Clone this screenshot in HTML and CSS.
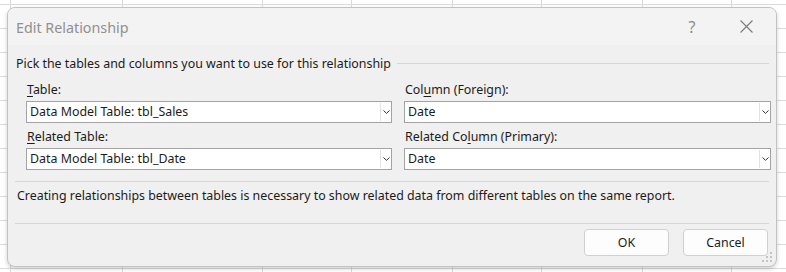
FILE: index.html
```html
<!DOCTYPE html>
<html lang="en">
<head>
  <meta charset="UTF-8" />
  <title>Edit Relationship</title>
  <link rel="stylesheet" href="styles.css">
</head>
<body>
  <div class="sheet">
    <div class="dialog">
      <div class="titlebar">
        <span class="title">Edit Relationship</span>
        <span class="help">?</span>
        <span class="close">
          <svg width="13" height="13" viewBox="0 0 13 13"><path d="M0.5 0.5 L12.5 12.5 M12.5 0.5 L0.5 12.5" stroke="#7a7a7a" stroke-width="1.1" fill="none"/></svg>
        </span>
      </div>

      <div class="content">
        <div class="group-head">
          <span>Pick the tables and columns you want to use for this relationship</span>
          <div class="rule"></div>
        </div>

        <div class="fields">
          <div class="field">
            <label><u>T</u>able:</label>
            <div class="combo">
              <span class="combo-value">Data Model Table: tbl_Sales</span>
              <span class="combo-btn"><svg width="7" height="4" viewBox="0 0 7 4"><path d="M0.5 0.5 L3.5 3.3 L6.5 0.5" stroke="#333" fill="none"/></svg></span>
            </div>
          </div>
          <div class="field">
            <label>Col<u>u</u>mn (Foreign):</label>
            <div class="combo">
              <span class="combo-value">Date</span>
              <span class="combo-btn"><svg width="7" height="4" viewBox="0 0 7 4"><path d="M0.5 0.5 L3.5 3.3 L6.5 0.5" stroke="#333" fill="none"/></svg></span>
            </div>
          </div>
          <div class="field">
            <label><u>R</u>elated Table:</label>
            <div class="combo">
              <span class="combo-value">Data Model Table: tbl_Date</span>
              <span class="combo-btn"><svg width="7" height="4" viewBox="0 0 7 4"><path d="M0.5 0.5 L3.5 3.3 L6.5 0.5" stroke="#333" fill="none"/></svg></span>
            </div>
          </div>
          <div class="field">
            <label>Related Co<u>l</u>umn (Primary):</label>
            <div class="combo">
              <span class="combo-value">Date</span>
              <span class="combo-btn"><svg width="7" height="4" viewBox="0 0 7 4"><path d="M0.5 0.5 L3.5 3.3 L6.5 0.5" stroke="#333" fill="none"/></svg></span>
            </div>
          </div>
        </div>

        <div class="divider"></div>
        <p class="note">Creating relationships between tables is necessary to show related data from different tables on the same report.</p>
        <div class="divider"></div>

        <div class="buttons">
          <button class="btn">OK</button>
          <button class="btn">Cancel</button>
        </div>
      </div>

      <div class="grip">
        <svg width="12" height="12" viewBox="0 0 12 12" fill="#c4c4c4">
          <rect x="8" y="0" width="2" height="2"/>
          <rect x="4" y="4" width="2" height="2"/><rect x="8" y="4" width="2" height="2"/>
          <rect x="0" y="8" width="2" height="2"/><rect x="4" y="8" width="2" height="2"/><rect x="8" y="8" width="2" height="2"/>
        </svg>
      </div>
    </div>
  </div>
</body>
</html>
```

FILE: styles.css
```css
html, body {
  margin: 0;
  padding: 0;
}
body {
  width: 786px;
  height: 272px;
  overflow: hidden;
  font-family: "Noto Sans", "Open Sans", sans-serif;
  font-size: 12.4px;
  color: #1b1b1b;
}

/* spreadsheet behind the dialog */
.sheet {
  width: 786px;
  height: 272px;
  padding: 7px 0 0 7px;
  box-sizing: border-box;
  background-color: #fff;
  background-image:
    linear-gradient(to right, transparent 10px, #dadada 10px, #dadada 11px, transparent 11px),
    linear-gradient(to right, transparent 122px, #dadada 122px, #dadada 123px, transparent 123px),
    linear-gradient(to right, transparent 262px, #dadada 262px, #dadada 263px, transparent 263px),
    linear-gradient(to right, transparent 351px, #dadada 351px, #dadada 352px, transparent 352px),
    linear-gradient(to right, transparent 452px, #dadada 452px, #dadada 453px, transparent 453px),
    linear-gradient(to right, transparent 541px, #dadada 541px, #dadada 542px, transparent 542px),
    linear-gradient(to right, transparent 642px, #dadada 642px, #dadada 643px, transparent 643px),
    linear-gradient(to right, transparent 731px, #dadada 731px, #dadada 732px, transparent 732px),
    repeating-linear-gradient(to bottom, transparent 0, transparent 4px, #dadada 4px, #dadada 5px, transparent 5px, transparent 24px);
}

.dialog {
  position: relative;
  width: 770px;
  height: 260px;
  box-sizing: border-box;
  background: #f0f0f0;
  border: 1px solid #c2c2c2;
  border-radius: 8px;
  box-shadow: 0 2px 4px rgba(0, 0, 0, 0.18);
  overflow: hidden;
}

.titlebar {
  display: flex;
  align-items: center;
  height: 37px;
  background: #f3f3f3;
  padding-left: 8px;
}
.title {
  flex: 1;
  font-size: 14.3px;
  color: #909090;
  padding-top: 1px;
}
.help {
  width: 20px;
  text-align: center;
  font-size: 16px;
  color: #8c8c8c;
  margin-right: 38px;
}
.close {
  display: flex;
  margin-right: 23px;
}

.content {
  padding: 10px 7px 0 7px;
}

.group-head {
  display: flex;
  align-items: center;
  gap: 6px;
  padding-left: 1px;
  height: 16px;
}
.rule {
  flex: 1;
  height: 1px;
  background: #d6d6d6;
}

.fields {
  display: grid;
  grid-template-columns: 366px 367px;
  column-gap: 12px;
  row-gap: 6px;
  padding: 11px 0 0 11px;
}
.field label {
  display: block;
  height: 16px;
  line-height: 16px;
  padding-left: 1px;
  margin-bottom: 3px;
}
.field label u {
  text-decoration-thickness: 1px;
  text-underline-offset: 2px;
}

.combo {
  display: flex;
  height: 22px;
  box-sizing: border-box;
  border: 1px solid #a3a3a3;
  background: #fff;
}
.combo-value {
  flex: 1;
  line-height: 20px;
  padding-left: 3px;
}
.combo-btn {
  width: 10px;
  display: flex;
  align-items: center;
  justify-content: center;
  border-left: 1px solid #e3e3e3;
  margin: 1px 0;
}

.divider {
  height: 1px;
  background: #d6d6d6;
}
.fields + .divider {
  margin-top: 11px;
}
.note {
  margin: 0;
  padding: 5px 0 0 2px;
  height: 41px;
  box-sizing: border-box;
}

.buttons {
  display: flex;
  justify-content: flex-end;
  gap: 14px;
  padding-top: 5px;
  padding-right: 1px;
}
.btn {
  width: 85px;
  height: 27px;
  background: #fdfdfd;
  border: 1px solid #d0d0d0;
  border-radius: 4px;
  font-family: inherit;
  font-size: 12.4px;
  color: #1b1b1b;
  padding: 0;
}

.grip {
  position: absolute;
  right: 2px;
  bottom: 2px;
  display: flex;
}
```
